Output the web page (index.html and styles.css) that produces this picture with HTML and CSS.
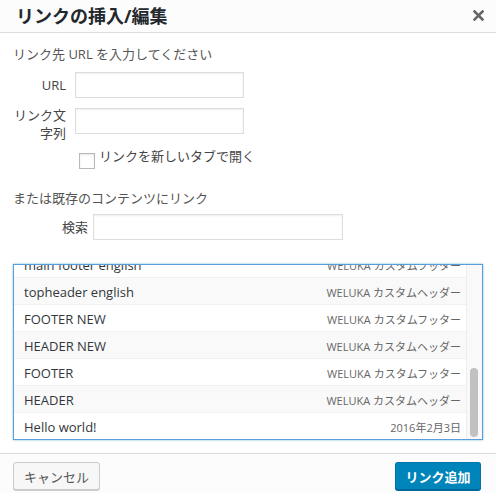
FILE: index.html
```html
<!DOCTYPE html>
<html lang="ja">
<head>
<meta charset="utf-8">
<link rel="stylesheet" href="styles.css">
</head>
<body>
<div class="dialog">
  <div class="header">
    <h1 class="title">リンクの挿入/編集</h1>
    <span class="close"><svg width="11" height="11" viewBox="0 0 11 11"><path d="M1.5 1.5 L9.5 9.5 M9.5 1.5 L1.5 9.5" stroke="#666" stroke-width="2.6" stroke-linecap="square"/></svg></span>
  </div>
  <div class="body">
    <p class="howto first">リンク先 URL を入力してください</p>
    <div class="field url">
      <label class="lbl">URL</label>
      <span class="txt"></span>
    </div>
    <div class="field text">
      <label class="lbl">リンク文<br>字列</label>
      <span class="txt"></span>
    </div>
    <div class="check-row">
      <span class="cb"></span>
      <span class="cb-label">リンクを新しいタブで開く</span>
    </div>
    <p class="howto second">または既存のコンテンツにリンク</p>
    <div class="field search">
      <label class="lbl">検索</label>
      <span class="txt"></span>
    </div>
    <div class="list">
      <ul class="rows">
        <li class="row"><span class="r-title">main footer english</span><span class="r-info">WELUKA カスタムフッター</span></li>
        <li class="row alt"><span class="r-title">topheader english</span><span class="r-info">WELUKA カスタムヘッダー</span></li>
        <li class="row"><span class="r-title">FOOTER NEW</span><span class="r-info">WELUKA カスタムフッター</span></li>
        <li class="row alt"><span class="r-title">HEADER NEW</span><span class="r-info">WELUKA カスタムヘッダー</span></li>
        <li class="row"><span class="r-title">FOOTER</span><span class="r-info">WELUKA カスタムフッター</span></li>
        <li class="row alt"><span class="r-title">HEADER</span><span class="r-info">WELUKA カスタムヘッダー</span></li>
        <li class="row last"><span class="r-title">Hello world!</span><span class="r-info">2016年2月3日</span></li>
      </ul>
      <div class="scrollbar"><div class="thumb"></div></div>
    </div>
  </div>
  <div class="footer">
    <span class="btn cancel">キャンセル</span>
    <span class="btn primary">リンク追加</span>
  </div>
</div>
</body>
</html>
```

FILE: styles.css
```css
html, body {
  margin: 0;
  padding: 0;
  background: #fff;
}
body {
  font-family: "Open Sans", "Noto Sans CJK JP", sans-serif;
  color: #32373c;
  width: 496px;
  height: 493px;
  overflow: hidden;
}
.dialog {
  width: 496px;
  height: 493px;
  display: flex;
  flex-direction: column;
  background: #fff;
}
.header {
  height: 32px;
  border-bottom: 1px solid #ddd;
  background: #fcfcfc;
  display: flex;
  align-items: center;
  justify-content: space-between;
  padding: 0 12px 0 16px;
}
.title {
  margin: 0;
  font-size: 18px;
  font-weight: 700;
  color: #23282d;
  line-height: 30px;
  letter-spacing: 0;
}
.close {
  display: flex;
  margin-top: -1px;
}
.body {
  padding: 12px 13px 0 13px;
  flex: 1;
}
.howto {
  margin: 0;
  font-size: 13px;
  line-height: 18px;
  color: #555;
}
.field {
  display: flex;
  align-items: center;
}
.lbl {
  font-size: 13px;
  line-height: 18px;
  color: #444;
  text-align: right;
}
.txt {
  display: block;
  height: 24px;
  border: 1px solid #ddd;
  box-shadow: inset 0 1px 2px rgba(0,0,0,0.07);
  background: #fff;
}
.field.url {
  margin-top: 9px;
}
.field.url .lbl,
.field.text .lbl {
  width: 53px;
  margin-right: 9px;
}
.field.url .txt,
.field.text .txt {
  width: 167px;
}
.field.text {
  margin-top: 8px;
  align-items: flex-start;
}
.field.text .txt {
  margin-top: 2px;
}
.check-row {
  display: flex;
  align-items: flex-start;
  margin-top: 7px;
  margin-left: 66px;
}
.cb {
  display: block;
  width: 14px;
  height: 14px;
  border: 1px solid #b4b9be;
  box-shadow: inset 0 1px 2px rgba(0,0,0,0.1);
  background: #fff;
  margin-top: 4px;
  margin-right: 4px;
}
.cb-label {
  font-size: 13px;
  line-height: 18px;
  color: #444;
  margin-top: -2px;
}
.howto.second {
  margin-top: 20px;
}
.field.search {
  margin-top: 7px;
}
.field.search .lbl {
  width: 75px;
  margin-right: 5px;
}
.field.search .txt {
  width: 248px;
}
.list {
  position: relative;
  margin-top: 24px;
  height: 174px;
  border: 1px solid #5b9dd9;
  box-shadow: 0 0 2px rgba(30,140,190,0.6);
  overflow: hidden;
  background: #f9f9f9;
}
.rows {
  list-style: none;
  margin: -14px 15px 0 0;
  padding: 0;
  background: #fff;
}
.row {
  height: 26px;
  border-bottom: 1px solid #f1f1f1;
  display: flex;
  align-items: center;
  justify-content: space-between;
  padding: 1px 6px 0 10px;
  box-sizing: content-box;
  background: #fff;
}
.row {
  height: 25px;
}
.row.alt {
  background: #f9f9f9;
}
.row.last {
  border-bottom: 0;
}
.r-title {
  font-size: 13px;
  color: #32373c;
}
.r-info {
  font-size: 11px;
  color: #666;
}
.scrollbar {
  position: absolute;
  top: 0;
  right: 0;
  width: 15px;
  height: 100%;
  background: #f9f9f9;
  border-left: 1px solid #eee;
}
.thumb {
  position: absolute;
  left: 3px;
  top: 103px;
  width: 8px;
  height: 69px;
  border-radius: 4px;
  background: #c1c1c1;
}
.footer {
  height: 40px;
  border-top: 1px solid #ddd;
  background: #fcfcfc;
  display: flex;
  align-items: flex-start;
  justify-content: space-between;
  padding: 8px 15px 0 13px;
  box-sizing: border-box;
}
.btn {
  display: flex;
  align-items: center;
  justify-content: center;
  height: 26px;
  border-radius: 3px;
  font-size: 13px;
  box-sizing: content-box;
}
.cancel {
  width: 85px;
  background: #f7f7f7;
  border: 1px solid #ccc;
  box-shadow: 0 1px 0 #ccc;
  color: #555;
}
.primary {
  width: 84px;
  background: #0085ba;
  border: 1px solid #0073aa;
  border-bottom-color: #006799;
  box-shadow: 0 1px 0 #006799;
  color: #fff;
  font-weight: 600;
}
```
